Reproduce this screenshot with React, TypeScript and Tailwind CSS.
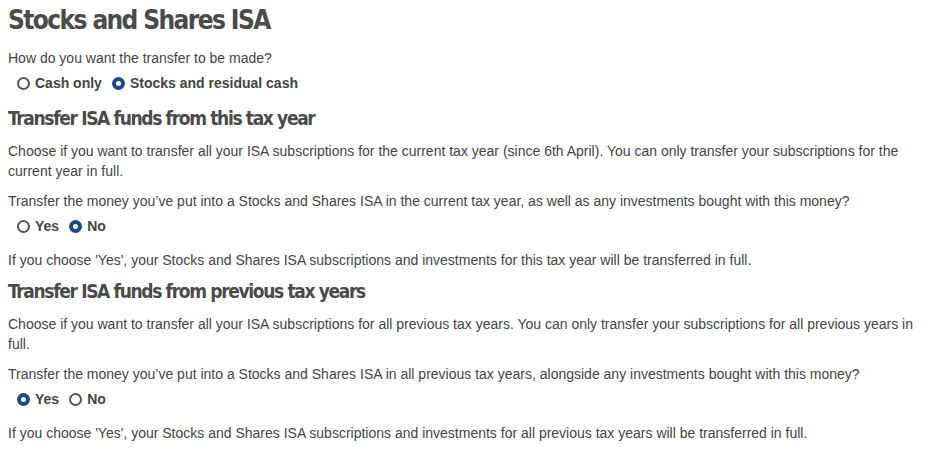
import { ReactNode } from "react";

const heading = { fontFamily: '"DejaVu Sans Condensed", "DejaVu Sans", sans-serif' };

function Radio({ label, checked }: { label: string; checked?: boolean }) {
  return (
    <label className="flex items-center gap-[5px] font-bold text-[#444]">
      {checked ? (
        <span className="w-[13px] h-[13px] rounded-full bg-[#1a4a8c] flex items-center justify-center">
          <span className="w-[5px] h-[5px] rounded-full bg-white" />
        </span>
      ) : (
        <span className="w-[13px] h-[13px] rounded-full border-[2px] border-[#555] bg-white" />
      )}
      {label}
    </label>
  );
}

function Radios({ children }: { children: ReactNode }) {
  return <div className="flex items-center gap-[10px] pl-[9px] mt-[5px]">{children}</div>;
}

function Section({ title, intro, question, yes, note }: { title: string; intro: string; question: string; yes: boolean; note: string }) {
  return (
    <section>
      <h2 style={heading} className="text-[19px] font-bold font-stretch-condensed text-[#4a4a4a] leading-[26px] tracking-[-1.35px] mt-[8px]">{title}</h2>
      <p className="mt-[10px] leading-[20px]">{intro}</p>
      <p className="mt-[10px] leading-[20px]">{question}</p>
      <Radios>
        <Radio label="Yes" checked={yes} />
        <Radio label="No" checked={!yes} />
      </Radios>
      <p className="mt-[13px] leading-[20px]">{note}</p>
    </section>
  );
}

export default function App() {
  return (
    <div className="bg-white px-[8px] pt-[2px] text-[14px] text-[#444] w-[935px] h-[451px] overflow-hidden" style={{ fontFamily: '"Liberation Sans", Arial, sans-serif' }}>
      <h1 style={heading} className="text-[26px] font-bold font-stretch-condensed text-[#4a4a4a] leading-[36px] tracking-[-1.6px]">Stocks and Shares ISA</h1>
      <p className="mt-[10px] leading-[20px]">How do you want the transfer to be made?</p>
      <Radios>
        <Radio label="Cash only" />
        <Radio label="Stocks and residual cash" checked />
      </Radios>
      <div className="mt-[11px]">
        <Section
          title="Transfer ISA funds from this tax year"
          intro="Choose if you want to transfer all your ISA subscriptions for the current tax year (since 6th April). You can only transfer your subscriptions for the current year in full."
          question="Transfer the money you’ve put into a Stocks and Shares ISA in the current tax year, as well as any investments bought with this money?"
          yes={false}
          note="If you choose 'Yes', your Stocks and Shares ISA subscriptions and investments for this tax year will be transferred in full."
        />
      </div>
      <Section
        title="Transfer ISA funds from previous tax years"
        intro="Choose if you want to transfer all your ISA subscriptions for all previous tax years. You can only transfer your subscriptions for all previous years in full."
        question="Transfer the money you’ve put into a Stocks and Shares ISA in all previous tax years, alongside any investments bought with this money?"
        yes={true}
        note="If you choose 'Yes', your Stocks and Shares ISA subscriptions and investments for all previous tax years will be transferred in full."
      />
    </div>
  );
}
